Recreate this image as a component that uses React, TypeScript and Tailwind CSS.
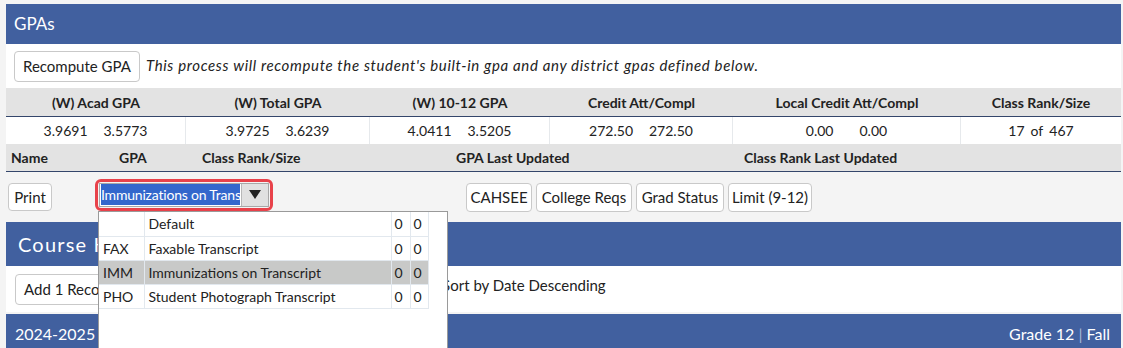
import React from "react";

const Btn = ({ children, className = "" }: { children: React.ReactNode; className?: string }) => (
  <button className={`bg-white border border-[#c9c9c9] rounded-[4px] text-[#222] leading-none ${className}`}>
    {children}
  </button>
);

export default function App() {
  const cols = ["(W) Acad GPA", "(W) Total GPA", "(W) 10-12 GPA", "Credit Att/Compl", "Local Credit Att/Compl", "Class Rank/Size"];
  const vals: [string, string, string][] = [
    ["3.9691", "3.5773", "gap-[16px]"],
    ["3.9725", "3.6239", "gap-[16px]"],
    ["4.0411", "3.5205", "gap-[16px]"],
    ["272.50", "272.50", "gap-[16px]"],
    ["0.00", "0.00", "gap-[26px]"],
  ];
  const rows = [
    ["", "Default"],
    ["FAX", "Faxable Transcript"],
    ["IMM", "Immunizations on Transcript"],
    ["PHO", "Student Photograph Transcript"],
  ];
  return (
    <div className="relative w-[1123px] h-[348px] overflow-hidden bg-[#f4f4f4] pt-[4px] pl-[6px] pr-[2px] font-['Lato',sans-serif] text-[#222]">
      {/* GPAs */}
      <div className="h-[40px] bg-[#41609f] text-white text-[17px] flex items-center pl-[8px]">GPAs</div>
      <div className="h-[44px] bg-white flex items-center pl-[8px] gap-[6px]">
        <Btn className="h-[31px] px-[8px] text-[15px]">Recompute GPA</Btn>
        <span className="italic text-[15px] tracking-[0.65px] text-[#222] -mt-[2px]">
          This process will recompute the student's built-in gpa and any district gpas defined below.
        </span>
      </div>
      <div className="grid grid-cols-[180px_184px_180px_183px_228px_1fr]">
        {cols.map((c) => (
          <div key={c} className="h-[29px] bg-[#e3e3e3] border-b border-[#34466b] flex items-center justify-center text-[14px] font-bold">
            {c}
          </div>
        ))}
        {vals.map(([a, b, g], i) => (
          <div key={i} className={`h-[27px] bg-white border-r border-[#e6e9ec] flex items-center justify-center text-[14px] ${g}`}>
            <span>{a}</span>
            <span>{b}</span>
          </div>
        ))}
        <div className="h-[27px] bg-white flex items-center justify-center text-[14px] gap-[6px]">
          <span>17</span>
          <span>of</span>
          <span>467</span>
        </div>
      </div>
      <div className="h-[28px] bg-[#e3e3e3] border-b border-[#34466b] grid grid-cols-[108px_83px_254px_288px_1fr] items-center pl-[5px] text-[14px] font-bold">
        <span>Name</span>
        <span>GPA</span>
        <span>Class Rank/Size</span>
        <span>GPA Last Updated</span>
        <span>Class Rank Last Updated</span>
      </div>
      <div className="h-[48px] flex items-center pl-[2px]">
        <Btn className="h-[28px] w-[44px] mt-[2px] text-[15px]">Print</Btn>
        <div className="ml-[43px] w-[178px] h-[32px] rounded-[6px] border-[3px] border-[#e8424a] p-[1px] -mt-[3px] flex">
          <div className="flex-1 flex border border-[#a8a8a8] bg-white">
            <div className="flex-1 flex items-center pl-[1px] overflow-hidden">
              <span className="bg-[#3367cc] text-white text-[14px] tracking-[-0.2px] h-[21px] leading-[21px] whitespace-nowrap overflow-hidden w-[139px]">
                Immunizations on Transcript
              </span>
            </div>
            <div className="w-[27px] bg-[#e1e1e1] border-l border-[#b8b8b8] flex items-center justify-center">
              <svg width="12" height="9" viewBox="0 0 12 9"><path d="M0 0h12L6 9z" fill="#222" /></svg>
            </div>
          </div>
        </div>
        <div className="ml-[193px] flex gap-[4px] mt-[2px]">
          <Btn className="h-[29px] w-[66px] text-[15px]">CAHSEE</Btn>
          <Btn className="h-[29px] w-[96px] text-[15px]">College Reqs</Btn>
          <Btn className="h-[29px] w-[88px] text-[15px]">Grad Status</Btn>
          <Btn className="h-[29px] w-[84px] text-[15px]">Limit (9-12)</Btn>
        </div>
      </div>
      {/* Course History */}
      <div className="mt-[2px] h-[44px] bg-[#41609f] text-white text-[20px] tracking-[1.2px] flex items-center pl-[12px]">
        Course History
      </div>
      <div className="h-[46px] bg-white flex items-center pl-[9px]">
        <Btn className="h-[31px] px-[8px] text-[15px]">Add 1 Record</Btn>
        <span className="ml-[320px] -mt-[8px] text-[15px]">Sort by Date Descending</span>
      </div>
      <div className="mt-[2px] h-[40px] bg-[#41609f] text-white text-[16px] flex items-center justify-between pl-[9px] pr-[11px]">
        <span>2024-2025</span>
        <span>
          Grade 12 <span className="text-[#a9b8d6]">|</span> Fall
        </span>
      </div>

      {/* dropdown */}
      <div className="absolute left-[98px] top-[211px] w-[350px] h-[150px] bg-white border border-[#9a9a9a]">
        <table className="border-collapse text-[14px]">
          <tbody>
            {rows.map(([c, n]) => (
              <tr key={n} className={`h-[24px] ${c === "IMM" ? "bg-[#c8c9c8]" : ""}`}>
                <td className="w-[45px] border border-[#e2e8ee] border-l-0 border-t-0 pl-[4px] p-0">{c}</td>
                <td className="w-[247px] border border-[#e2e8ee] border-t-0 pl-[4px] p-0">{n}</td>
                <td className="w-[19px] border border-[#e2e8ee] border-t-0 pl-[3px] p-0">0</td>
                <td className="w-[18px] border border-[#e2e8ee] border-t-0 pl-[3px] p-0">0</td>
              </tr>
            ))}
          </tbody>
        </table>
      </div>
    </div>
  );
}
